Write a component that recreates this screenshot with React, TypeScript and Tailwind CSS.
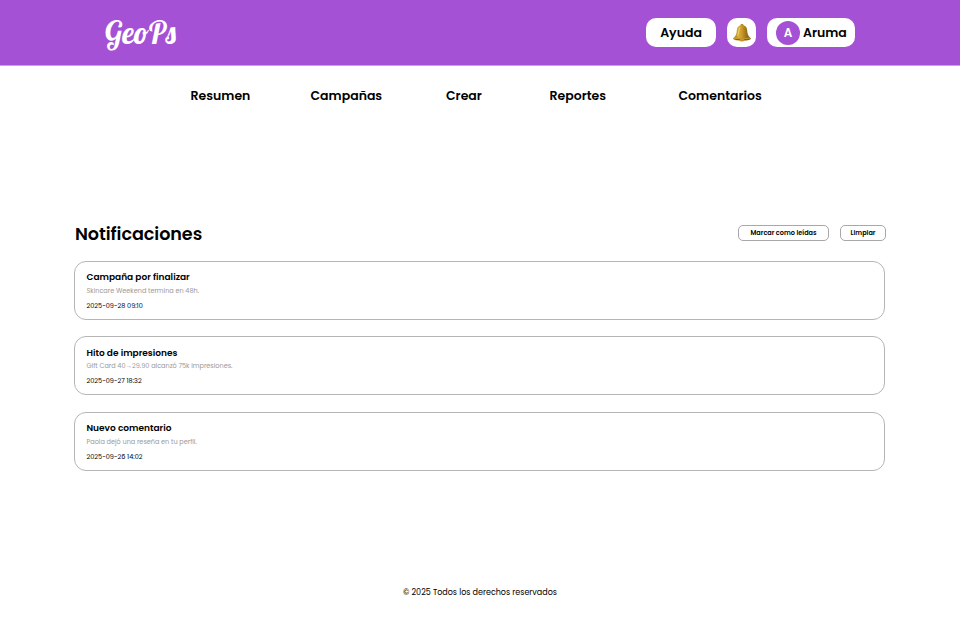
const navItems = [
  { label: 'Resumen', place: 'ml-[190.5px] w-[120px]' },
  { label: 'Campañas', place: 'w-[135.5px]' },
  { label: 'Crear', place: 'w-[103.5px]' },
  { label: 'Reportes', place: 'w-[129px]' },
  { label: 'Comentarios', place: '' },
];

const notifications = [
  { title: 'Campaña por finalizar', text: 'Skincare Weekend termina en 48h.', date: '2025-09-28 09:10' },
  { title: 'Hito de impresiones', text: 'Gift Card 40→29.90 alcanzó 75k impresiones.', date: '2025-09-27 18:32' },
  { title: 'Nuevo comentario', text: 'Paola dejó una reseña en tu perfil.', date: '2025-09-26 14:02' },
];

function Bell() {
  return (
    <svg viewBox="0 0 20 20" className="h-[20px] w-[20px]" aria-hidden="true">
      <defs>
        <linearGradient id="gold" x1="0" x2="1">
          <stop offset="0" stopColor="#a57c1c" />
          <stop offset=".3" stopColor="#d9ad35" />
          <stop offset=".45" stopColor="#cfa02b" />
          <stop offset=".72" stopColor="#a0761a" />
          <stop offset="1" stopColor="#7b5a17" />
        </linearGradient>
      </defs>
      <path d="M8.3 3.2C8.1 1.5 9 1 10 1s1.9.5 1.7 2.2Z" fill="#b38a29" />
      <path d="M10 2.3c-3.2 0-5 1.8-5.2 5-.2 3.6-.8 5.5-3.1 7.4-.8.6-.7 1.3.1 1.7 1.6.8 4.6 1.2 8.2 1.2s6.6-.4 8.2-1.2c.8-.4.9-1.1.1-1.7-2.3-1.9-2.9-3.8-3.1-7.4-.2-3.2-2-5-5.2-5Z" fill="url(#gold)" />
      <ellipse cx="10" cy="16.2" rx="7" ry="1" fill="#82601a" />
      <ellipse cx="10" cy="17" rx="2.4" ry="1.6" fill="#c0922a" />
      <path d="M2 15c4.2 1 11.8 1 16 0" fill="none" stroke="#d3a637" strokeWidth=".8" />
      <path d="M7.8 4.8C6.7 6.3 7 9.8 5.9 12.2" fill="none" stroke="#f1d374" strokeWidth="1" strokeLinecap="round" />
    </svg>
  );
}

export default function App() {
  return (
    <div className="flex h-[629px] w-[960px] flex-col overflow-hidden bg-white font-['Poppins','Liberation_Sans',sans-serif] text-black">
      <header className="flex h-[66px] shrink-0 items-start border-b border-[#d09af0] bg-[#a551d5] pl-[105px]">
        <div className="mt-[13px] w-[541px] font-['Lobster','Liberation_Serif',serif] text-[30.3px] leading-[40px] text-white">GeoPs</div>
        <button className="mt-[18px] h-[29px] w-[70px] rounded-[10px] bg-white pt-px text-[12.5px] font-semibold">Ayuda</button>
        <button className="mt-[18px] ml-[11px] flex h-[29px] w-[29px] items-center justify-center rounded-[10px] bg-white"><Bell /></button>
        <button className="mt-[18px] ml-[11px] flex h-[29px] w-[88px] items-center rounded-[10px] bg-white pl-[9px] text-[12.5px] font-semibold">
          <span className="flex h-6 w-6 shrink-0 items-center justify-center rounded-full bg-[#a551d5] text-[12px] text-white">A</span>
          <span className="ml-[3px] pt-px">Aruma</span>
        </button>
      </header>
      <nav className="mt-[20px] flex h-5 items-center text-[12.5px] font-semibold">
        {navItems.map((item) => <a key={item.label} className={item.place}>{item.label}</a>)}
      </nav>
      <main className="mt-[113px] ml-[74px] w-[812px]">
        <div className="flex h-7 items-center">
          <h1 className="mr-auto pt-[2px] pl-px text-[17.6px] font-semibold tracking-[-0.004em]">Notificaciones</h1>
          <button className="h-4 w-[91px] rounded-[5px] border border-[#a8a8a8] pt-px text-[6.5px] leading-none font-semibold">Marcar como leídas</button>
          <button className="ml-[11px] h-4 w-[46px] rounded-[5px] border border-[#a8a8a8] pt-px text-[6.5px] leading-none font-semibold">Limpiar</button>
        </div>
        <div className="mt-[14px] flex flex-col gap-[16.4px]">
          {notifications.map((item) => (
            <article key={item.title} className="h-[59px] w-[811px] rounded-[12px] border border-[#b5b5b5] pt-[8px] pl-[11.5px]">
              <h2 className="pt-[0.2px] text-[9px] leading-[14px] font-semibold">{item.title}</h2>
              <p className="mt-[0.8px] text-[6.5px] leading-[12px] text-[#999999]">{item.text}</p>
              <time className="mt-[3px] block text-[6.5px] leading-[12px]">{item.date}</time>
            </article>
          ))}
        </div>
      </main>
      <footer className="mt-[114px] text-center text-[8px] leading-4">© 2025 Todos los derechos reservados</footer>
    </div>
  );
}
